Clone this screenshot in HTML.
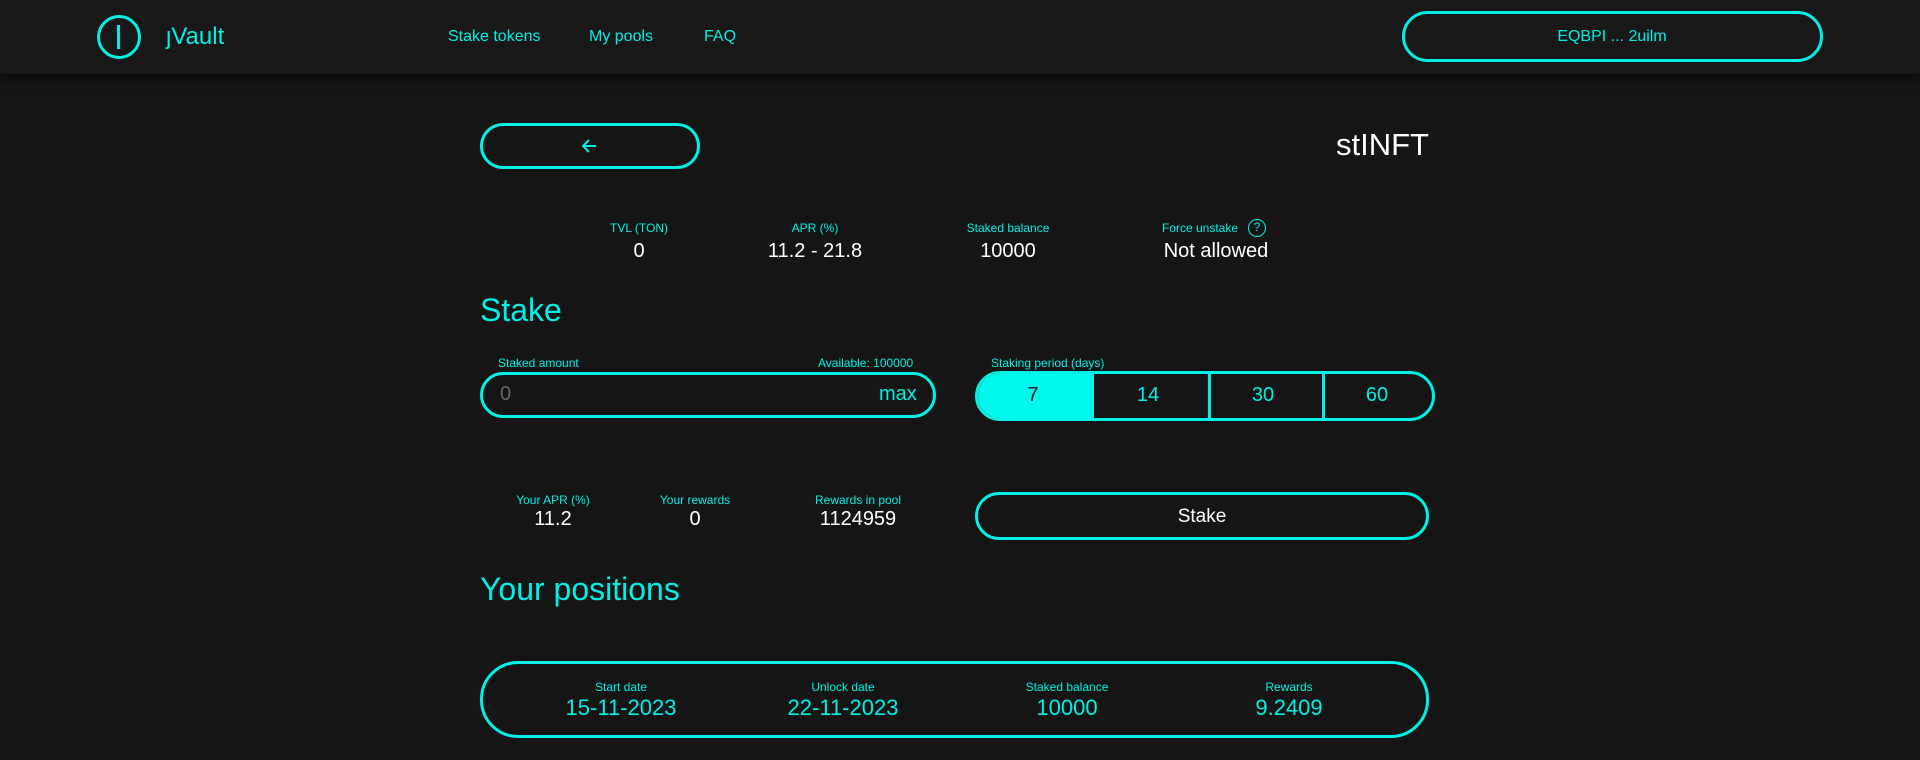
<!DOCTYPE html>
<html><head><meta charset="utf-8"><style>
*{margin:0;padding:0;box-sizing:border-box}
body{width:1920px;height:760px;background:#151515;font-family:"Liberation Sans",sans-serif;color:#fff;position:relative;overflow:hidden}
.c{color:#00f0e6}
.a{position:absolute}
.hdr{position:absolute;left:0;top:0;width:1920px;height:74px;background:#181818;box-shadow:0 4px 10px rgba(0,0,0,.6)}
.pill{position:absolute;border:3px solid #00f0e6;border-radius:30px}
.ctr{transform:translateX(-50%);text-align:center;white-space:nowrap}
.lbl{font-size:12px;color:#00f0e6}
.val{font-size:20px}
</style></head><body>
<div class="hdr">
  <div class="a" style="left:97px;top:15px;width:44px;height:44px;border:3px solid #00f0e6;border-radius:50%"></div>
  <div class="a" style="left:117px;top:25px;width:3px;height:24px;background:#00f0e6"></div>
  <div class="a c" style="left:166px;top:23px;font-size:24px">ȷVault</div>
  <div class="a c" style="left:448px;top:28px;font-size:16px">Stake tokens</div>
  <div class="a c" style="left:589px;top:28px;font-size:16px">My pools</div>
  <div class="a c" style="left:704px;top:28px;font-size:16px">FAQ</div>
  <div class="pill" style="left:1402px;top:11px;width:421px;height:51px;border-radius:26px"></div>
  <div class="a c ctr" style="left:1612px;top:28px;font-size:16px">EQBPI ... 2uilm</div>
</div>
<div class="pill" style="left:480px;top:123px;width:220px;height:46px;border-radius:23px"></div>
<svg class="a" style="left:580px;top:137px" width="18" height="18" viewBox="0 0 18 18"><path d="M16 9H3M9 3L3 9l6 6" stroke="#00f0e6" stroke-width="2" fill="none"/></svg>
<div class="a" style="right:491px;top:127px;font-size:31px">stINFT</div>

<div class="a lbl ctr" style="left:639px;top:221px">TVL (TON)</div>
<div class="a val ctr" style="left:639px;top:240px">0</div>
<div class="a lbl ctr" style="left:815px;top:221px">APR (%)</div>
<div class="a val ctr" style="left:815px;top:240px">11.2 - 21.8</div>
<div class="a lbl ctr" style="left:1008px;top:221px">Staked balance</div>
<div class="a val ctr" style="left:1008px;top:240px">10000</div>
<div class="a lbl ctr" style="left:1200px;top:221px">Force unstake</div>
<div class="a" style="left:1248px;top:219px;width:18px;height:18px;border:1.5px solid #00f0e6;border-radius:50%;color:#00f0e6;font-size:12px;text-align:center;line-height:15px">?</div>
<div class="a val ctr" style="left:1216px;top:240px">Not allowed</div>

<div class="a c" style="left:480px;top:292px;font-size:32px">Stake</div>
<div class="a lbl" style="left:498px;top:356px">Staked amount</div>
<div class="a lbl" style="left:818px;top:356px">Available: 100000</div>
<div class="pill" style="left:480px;top:372px;width:456px;height:46px;border-radius:23px"></div>
<div class="a" style="left:500px;top:383px;font-size:20px;color:#666">0</div>
<div class="a c" style="left:879px;top:383px;font-size:20px">max</div>

<div class="a lbl" style="left:991px;top:356px">Staking period (days)</div>
<div class="pill" style="left:975px;top:371px;width:460px;height:50px;border-radius:25px;overflow:hidden">
  <div class="a" style="left:0;top:0;width:116px;height:44px;background:#00f8ec"></div>
  <div class="a" style="left:230px;top:0;width:3px;height:44px;background:#00f0e6"></div>
  <div class="a" style="left:344px;top:0;width:3px;height:44px;background:#00f0e6"></div>
</div>
<div class="a ctr" style="left:1033px;top:384px;font-size:20px;color:#222">7</div>
<div class="a c ctr" style="left:1148px;top:384px;font-size:20px">14</div>
<div class="a c ctr" style="left:1263px;top:384px;font-size:20px">30</div>
<div class="a c ctr" style="left:1377px;top:384px;font-size:20px">60</div>

<div class="a lbl ctr" style="left:553px;top:493px">Your APR (%)</div>
<div class="a val ctr" style="left:553px;top:508px">11.2</div>
<div class="a lbl ctr" style="left:695px;top:493px">Your rewards</div>
<div class="a val ctr" style="left:695px;top:508px">0</div>
<div class="a lbl ctr" style="left:858px;top:493px">Rewards in pool</div>
<div class="a val ctr" style="left:858px;top:508px">1124959</div>
<div class="pill" style="left:975px;top:492px;width:454px;height:48px;border-radius:24px"></div>
<div class="a ctr" style="left:1202px;top:506px;font-size:19px">Stake</div>

<div class="a c" style="left:480px;top:571px;font-size:32px">Your positions</div>
<div class="pill" style="left:480px;top:661px;width:949px;height:77px;border-radius:38px"></div>
<div class="a lbl ctr" style="left:621px;top:680px">Start date</div>
<div class="a c ctr" style="left:621px;top:695px;font-size:22px">15-11-2023</div>
<div class="a lbl ctr" style="left:843px;top:680px">Unlock date</div>
<div class="a c ctr" style="left:843px;top:695px;font-size:22px">22-11-2023</div>
<div class="a lbl ctr" style="left:1067px;top:680px">Staked balance</div>
<div class="a c ctr" style="left:1067px;top:695px;font-size:22px">10000</div>
<div class="a lbl ctr" style="left:1289px;top:680px">Rewards</div>
<div class="a c ctr" style="left:1289px;top:695px;font-size:22px">9.2409</div>
</body></html>
